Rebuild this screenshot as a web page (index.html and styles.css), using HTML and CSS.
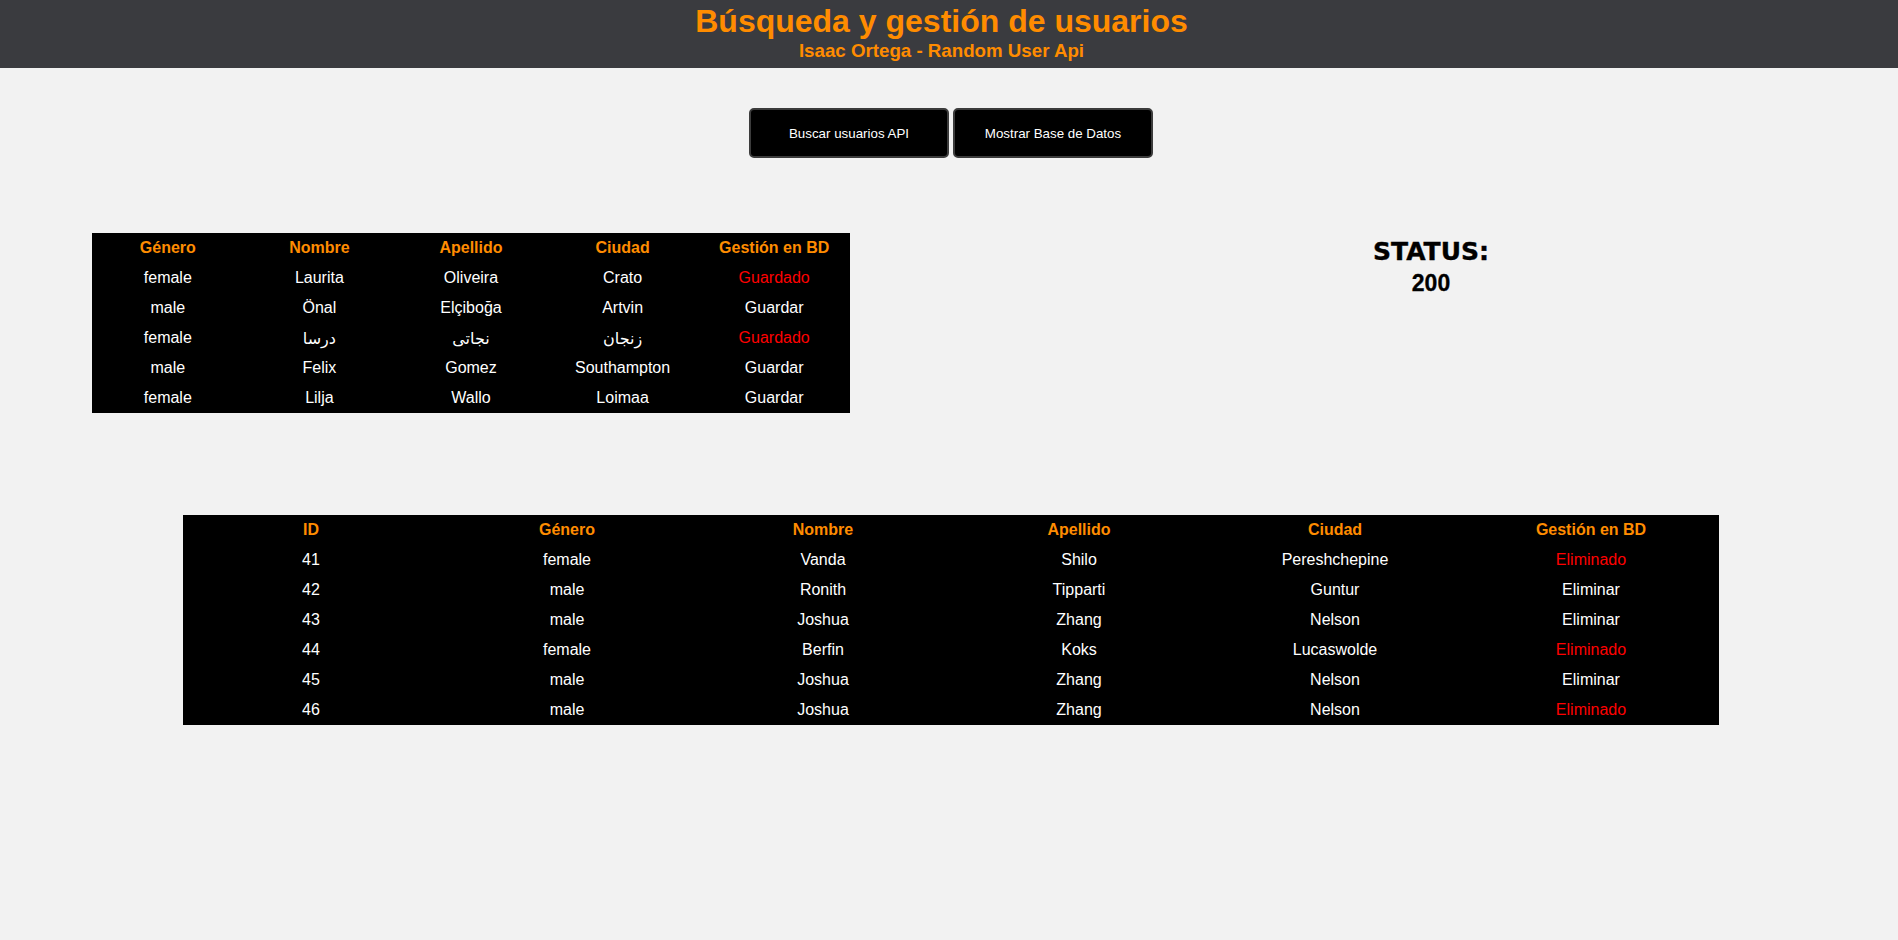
FILE: index.html
```html
<!DOCTYPE html>
<html lang="es">
<head>
<meta charset="utf-8">
<title>Búsqueda y gestión de usuarios</title>
<link rel="stylesheet" href="styles.css">
</head>
<body>
<header class="top">
  <h1 class="title">Búsqueda y gestión de usuarios</h1>
  <h3 class="subtitle">Isaac Ortega - Random User Api</h3>
</header>

<div class="actions">
  <button class="btn">Buscar usuarios API</button>
  <button class="btn">Mostrar Base de Datos</button>
</div>

<section class="api-row">
  <div class="api-col">
    <table class="grid api-table">
      <thead>
        <tr><th>Género</th><th>Nombre</th><th>Apellido</th><th>Ciudad</th><th>Gestión en BD</th></tr>
      </thead>
      <tbody>
        <tr><td>female</td><td>Laurita</td><td>Oliveira</td><td>Crato</td><td class="done">Guardado</td></tr>
        <tr><td>male</td><td>Önal</td><td>Elçiboğa</td><td>Artvin</td><td>Guardar</td></tr>
        <tr><td>female</td><td>درسا</td><td>نجاتی</td><td>زنجان</td><td class="done">Guardado</td></tr>
        <tr><td>male</td><td>Felix</td><td>Gomez</td><td>Southampton</td><td>Guardar</td></tr>
        <tr><td>female</td><td>Lilja</td><td>Wallo</td><td>Loimaa</td><td>Guardar</td></tr>
      </tbody>
    </table>
  </div>
  <div class="status-col">
    <div class="status-label">STATUS:</div>
    <div class="status-code">200</div>
  </div>
</section>

<section class="db-row">
  <table class="grid db-table">
    <thead>
      <tr><th>ID</th><th>Género</th><th>Nombre</th><th>Apellido</th><th>Ciudad</th><th>Gestión en BD</th></tr>
    </thead>
    <tbody>
      <tr><td>41</td><td>female</td><td>Vanda</td><td>Shilo</td><td>Pereshchepine</td><td class="done">Eliminado</td></tr>
      <tr><td>42</td><td>male</td><td>Ronith</td><td>Tipparti</td><td>Guntur</td><td>Eliminar</td></tr>
      <tr><td>43</td><td>male</td><td>Joshua</td><td>Zhang</td><td>Nelson</td><td>Eliminar</td></tr>
      <tr><td>44</td><td>female</td><td>Berfin</td><td>Koks</td><td>Lucaswolde</td><td class="done">Eliminado</td></tr>
      <tr><td>45</td><td>male</td><td>Joshua</td><td>Zhang</td><td>Nelson</td><td>Eliminar</td></tr>
      <tr><td>46</td><td>male</td><td>Joshua</td><td>Zhang</td><td>Nelson</td><td class="done">Eliminado</td></tr>
    </tbody>
  </table>
</section>
</body>
</html>
```
FILE: styles.css
```css
html, body {
  margin: 0;
  padding: 0;
}
body {
  background: #f2f2f2;
  font-family: "Liberation Sans", Arial, sans-serif;
  color: #000;
}
.top {
  background: #3a3b3f;
  height: 68px;
  box-sizing: border-box;
  padding-top: 3px;
  padding-right: 15px;
  text-align: center;
}
.title {
  margin: 0;
  font-size: 32px;
  line-height: 37px;
  font-weight: bold;
  color: #ff8c00;
}
.subtitle {
  margin: 0;
  font-size: 18.72px;
  line-height: 22px;
  font-weight: bold;
  color: #ff8c00;
}
.actions {
  display: flex;
  justify-content: center;
  gap: 4px;
  margin-top: 40px;
  padding-left: 4px;
}
.btn {
  width: 200px;
  height: 50px;
  background: #000;
  color: #fff;
  border: 2px solid #3c3c3c;
  border-radius: 5px;
  font-family: "Liberation Sans", Arial, sans-serif;
  font-size: 13.33px;
  padding: 0;
}
.api-row {
  display: grid;
  grid-template-columns: 1fr 1fr;
  margin-top: 75px;
}
.api-col {
  display: flex;
  justify-content: center;
  padding-right: 7px;
}
.status-col {
  display: flex;
  flex-direction: column;
  align-items: center;
  padding-left: 15px;
  padding-top: 5px;
}
.status-label {
  font-family: "DejaVu Sans", sans-serif;
  font-weight: bold;
  font-size: 25px;
  line-height: 28px;
  -webkit-text-stroke: 0.4px #000;
}
.status-code {
  font-weight: bold;
  font-size: 23px;
  line-height: 26px;
  margin-top: 4px;
  -webkit-text-stroke: 0.3px #000;
}
.grid {
  background: #000;
  border-collapse: collapse;
  table-layout: fixed;
  font-size: 16px;
  color: #fff;
}
.grid th, .grid td {
  height: 30px;
  padding: 0;
  text-align: center;
  vertical-align: middle;
  font-family: "Liberation Sans", "DejaVu Sans", Arial, sans-serif;
}
.grid th {
  color: #ff8c00;
  font-weight: bold;
}
.grid td.done {
  color: #ff0000;
}
.api-table {
  width: 758px;
}
.db-row {
  margin-top: 102px;
  padding-left: 183px;
}
.db-table {
  width: 1536px;
}
```
